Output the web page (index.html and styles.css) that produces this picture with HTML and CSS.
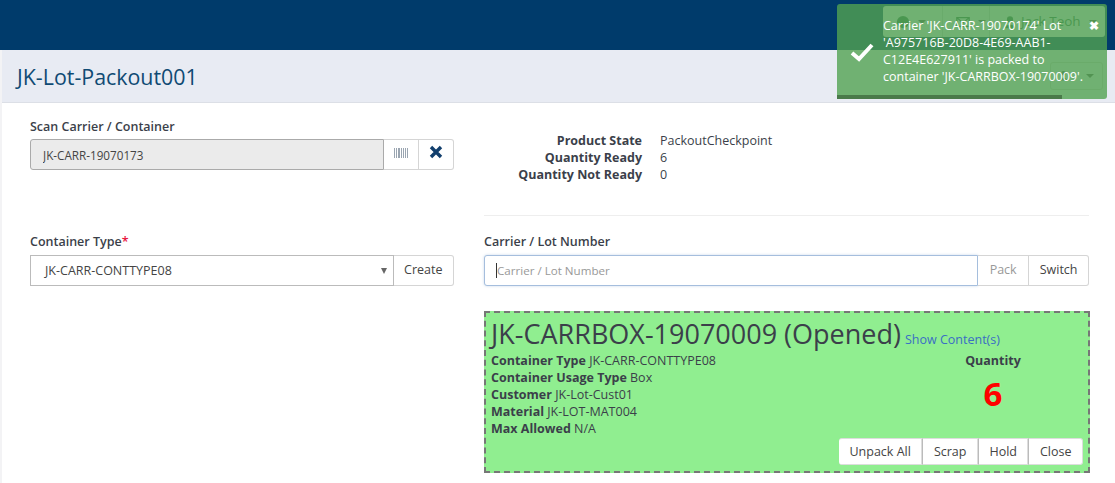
FILE: index.html
```html
<!DOCTYPE html>
<html lang="en">
<head>
  <meta charset="UTF-8" />
  <title>JK-Lot-Packout001</title>
  <link rel="stylesheet" href="styles.css">
</head>
<body>

<nav class="navbar">
  <div class="nav-tools">
    <span class="nav-item nav-first">
      <svg class="nav-icon" viewBox="0 0 16 16"><circle cx="8" cy="8" r="7"/></svg>
      <span class="caret"></span>
    </span>
    <span class="nav-item nav-second">
      <svg class="nav-icon" viewBox="0 0 16 16"><path d="M1 3h14v10H1z" fill="none" stroke="#2f6a4a" stroke-width="1.5"/><path d="M1 3l7 6 7-6" fill="none" stroke="#2f6a4a" stroke-width="1.5"/></svg>
      <span class="caret"></span>
    </span>
    <span class="nav-item nav-third">
      <svg class="nav-icon" viewBox="0 0 16 16"><circle cx="8" cy="5" r="3.5"/><path d="M2 15c0-5 12-5 12 0z"/></svg>
      <span class="nav-user">Jack Teoh</span>
      <span class="caret"></span>
    </span>
  </div>
</nav>

<div class="page">
  <header class="page-head">
    <h1>JK-Lot-Packout001</h1>
    <button class="head-menu">
      <svg class="menu-icon" viewBox="0 0 10 12"><circle cx="5" cy="3" r="2.5"/><path d="M1 11c0-4 8-4 8 0z"/></svg>
      <span class="caret"></span>
    </button>
  </header>

  <main class="content">
    <section class="col-left">
      <div class="field scan-field">
        <label>Scan Carrier / Container</label>
        <div class="input-group">
          <input class="control readonly" value="JK-CARR-19070173" readonly>
          <button class="btn btn-icon">
            <svg width="14" height="10" viewBox="0 0 14 10"><path d="M0 0h1v10H0zM2 0h1v10H2zM4 0h2v10H4zM7 0h1v10H7zM9 0h1v10H9zM11 0h1v10h-1zM13 0h1v10h-1z" fill="#9aa5b1"/></svg>
          </button>
          <button class="btn btn-icon">
            <svg width="14" height="14" viewBox="0 0 14 14"><path d="M2 2l10 10M12 2L2 12" stroke="#123f6d" stroke-width="3.4" fill="none"/></svg>
          </button>
        </div>
      </div>
      <div class="field type-field">
        <label>Container Type<span class="req">*</span></label>
        <div class="input-group">
          <div class="control select">
            <span>JK-CARR-CONTTYPE08</span>
            <span class="select-arrow"></span>
          </div>
          <button class="btn">Create</button>
        </div>
      </div>
    </section>

    <section class="col-right">
      <dl class="state">
        <dt>Product State</dt><dd>PackoutCheckpoint</dd>
        <dt>Quantity Ready</dt><dd>6</dd>
        <dt>Quantity Not Ready</dt><dd>0</dd>
      </dl>
      <hr class="divider">
      <div class="field lot-field">
        <label>Carrier / Lot Number</label>
        <div class="input-group">
          <div class="control focused"><span class="cursor"></span>Carrier / Lot Number</div>
          <button class="btn btn-muted">Pack</button>
          <button class="btn">Switch</button>
        </div>
      </div>

      <div class="box">
        <div class="box-title">
          <span class="box-name">JK-CARRBOX-19070009 (Opened)</span>
          <a class="box-link">Show Content(s)</a>
        </div>
        <div class="box-body">
          <ul class="box-info">
            <li><b>Container Type</b> JK-CARR-CONTTYPE08</li>
            <li><b>Container Usage Type</b> Box</li>
            <li><b>Customer</b> JK-Lot-Cust01</li>
            <li><b>Material</b> JK-LOT-MAT004</li>
            <li><b>Max Allowed</b> N/A</li>
          </ul>
          <div class="box-qty">
            <b>Quantity</b>
            <span class="qty-num">6</span>
          </div>
        </div>
        <div class="box-actions">
          <button class="btn">Unpack All</button>
          <button class="btn">Scrap</button>
          <button class="btn">Hold</button>
          <button class="btn">Close</button>
        </div>
      </div>
    </section>
  </main>
</div>

<div class="toast">
  <svg class="toast-check" width="24" height="20" viewBox="0 0 24 20"><path d="M2 11l7 6L22 3" fill="none" stroke="#fff" stroke-width="4"/></svg>
  <p>Carrier 'JK-CARR-19070174' Lot 'A975716B-20D8-4E69-AAB1-C12E4E627911' is packed to container 'JK-CARRBOX-19070009'.</p>
  <span class="toast-close">&#10006;</span>
  <div class="toast-bar"></div>
</div>

</body>
</html>
```

FILE: styles.css
```css
* { box-sizing: border-box; }

body {
  margin: 0;
  height: 483px;
  overflow: hidden;
  background: white;
  color: #3b3f4a;
  font-family: "Open Sans", sans-serif;
  font-size: 12.5px;
  line-height: 17px;
}

.navbar {
  height: 50px;
  background: #003b6b;
  display: flex;
  justify-content: flex-end;
  padding: 6px 10px 0 0;
}
.nav-tools {
  display: flex;
  height: 31px;
  width: 222px;
  background: #e9ebf2;
  border-radius: 3px;
}
.nav-item {
  display: flex;
  align-items: center;
  gap: 8px;
  padding-left: 13px;
  border-right: 1px solid #c8cbd3;
  color: #2f6a4a;
  white-space: nowrap;
}
.nav-first { width: 60px; }
.nav-second { width: 47px; }
.nav-third { flex: 1; border-right: 0; padding-left: 13px; gap: 4px; }
.nav-user { font-size: 13.5px; margin-right: 4px; }
.nav-icon { width: 14px; height: 14px; fill: #2f6a4a; flex: none; }
.caret {
  width: 0;
  height: 0;
  border: 4px solid transparent;
  border-top-color: #555;
  border-bottom: 0;
}

.page { border-left: 2px solid #f3f3f5; height: 433px; }

.page-head {
  height: 53px;
  background: #e8ebf3;
  border-bottom: 1px solid #dcdfe6;
  display: flex;
  align-items: center;
  justify-content: space-between;
  padding: 0 12px 0 15px;
}
.page-head h1 {
  margin: 0;
  font-size: 21.4px;
  font-weight: 400;
  color: #0f4a73;
}
.head-menu {
  width: 53px;
  height: 28px;
  border: 1px solid #ccc;
  border-radius: 3px;
  background: #e8ebf3;
  display: flex;
  align-items: center;
  justify-content: flex-end;
  gap: 18px;
  padding: 0 8px;
}
.menu-icon { width: 10px; height: 12px; fill: #555; }

.content {
  display: flex;
  gap: 30px;
  padding: 15px 26px 0 28px;
}
.col-left { width: 424px; flex: none; }
.col-right { flex: 1; min-width: 0; }

.field label {
  display: block;
  font-weight: 600;
  margin-bottom: 5px;
}
.scan-field { height: 115px; }
.scan-field label { margin-bottom: 4px; }
.req { color: #e8173f; }

.input-group { display: flex; height: 31px; }
.input-group .btn { padding-bottom: 2px; }
.control {
  flex: 1;
  min-width: 0;
  height: 31px;
  border: 1px solid #bbb;
  padding: 0 12px;
  font: inherit;
  color: #444;
  display: flex;
  align-items: center;
  background: white;
}
.readonly {
  background: #ebebeb;
  border-color: #aaa;
  border-radius: 3px 0 0 3px;
  font-size: 11.7px;
  outline: 0;
}
.select {
  justify-content: space-between;
  padding: 0 6px 0 14px;
}
.select-arrow {
  width: 0;
  height: 0;
  border: 3.5px solid transparent;
  border-top: 6px solid #666;
  border-bottom: 0;
}
.focused {
  border-color: #a5bedd;
  border-radius: 3px 0 0 3px;
  color: #999;
  font-size: 11.6px;
  padding-left: 11px;
  box-shadow: 0 0 3px #c9d8ea;
}
.cursor {
  width: 1px;
  height: 15px;
  background: #333;
}

.btn {
  height: 100%;
  background: white;
  border: 1px solid #d5d5d5;
  border-left: 0;
  padding: 0 10.5px;
  font: inherit;
  color: #444;
}
.input-group .btn:last-child { border-radius: 0 3px 3px 0; }
.btn-icon { width: 35px; padding: 0; }
.btn-muted { color: #999; padding: 0 11.5px; }

.state {
  display: grid;
  grid-template-columns: 158px 1fr;
  grid-auto-rows: 17px;
  column-gap: 18px;
  margin: 14px 0 0;
  height: 65px;
}
.state dt { text-align: right; font-weight: 700; }
.state dd { margin: 0; }

.divider {
  margin: 18px 0 17px;
  border: 0;
  border-top: 1px solid #eee;
}

.box {
  margin: 25px -1px 0 0;
  height: 162px;
  background: #90ee90;
  border: 2px dashed #777;
  padding: 3px 5px 2px;
  position: relative;
}
.box-title { display: flex; align-items: baseline; gap: 4px; height: 36px; }
.box-name { font-size: 27px; line-height: 36px; white-space: nowrap; }
.box-link { color: #3a6fc4; white-space: nowrap; }
.box-body { display: flex; justify-content: space-between; }
.box-info { list-style: none; margin: 0; padding: 0; }
.box-qty {
  width: 104px;
  margin-right: 38px;
  text-align: center;
}
.box-qty b { display: block; }
.qty-num {
  display: block;
  color: #f00;
  font-size: 33px;
  font-weight: 700;
  line-height: 50px;
}
.box-actions {
  position: absolute;
  right: 5px;
  bottom: 6px;
  height: 27px;
  display: flex;
}
.box-actions .btn {
  border: 1px solid #ddd;
  border-left: 1px solid #bbb;
}
.box-actions .btn:first-child { border-left: 0; border-radius: 3px 0 0 3px; }
.box-actions .btn:last-child { border-radius: 0 3px 3px 0; }

.toast {
  position: absolute;
  top: 4px;
  left: 837px;
  width: 270px;
  height: 95px;
  background: rgba(81, 163, 81, 0.8);
  color: white;
  border-radius: 3px;
  padding: 13px 20px 0 46px;
}
.toast p { margin: 0; }
.toast-check { position: absolute; left: 13px; top: 38px; }
.toast-close {
  position: absolute;
  right: 8px;
  top: 13px;
  font-size: 12px;
  font-weight: 700;
}
.toast-bar {
  position: absolute;
  left: 0;
  bottom: 0;
  width: 225px;
  height: 4px;
  background: #4a7a4a;
}
```
